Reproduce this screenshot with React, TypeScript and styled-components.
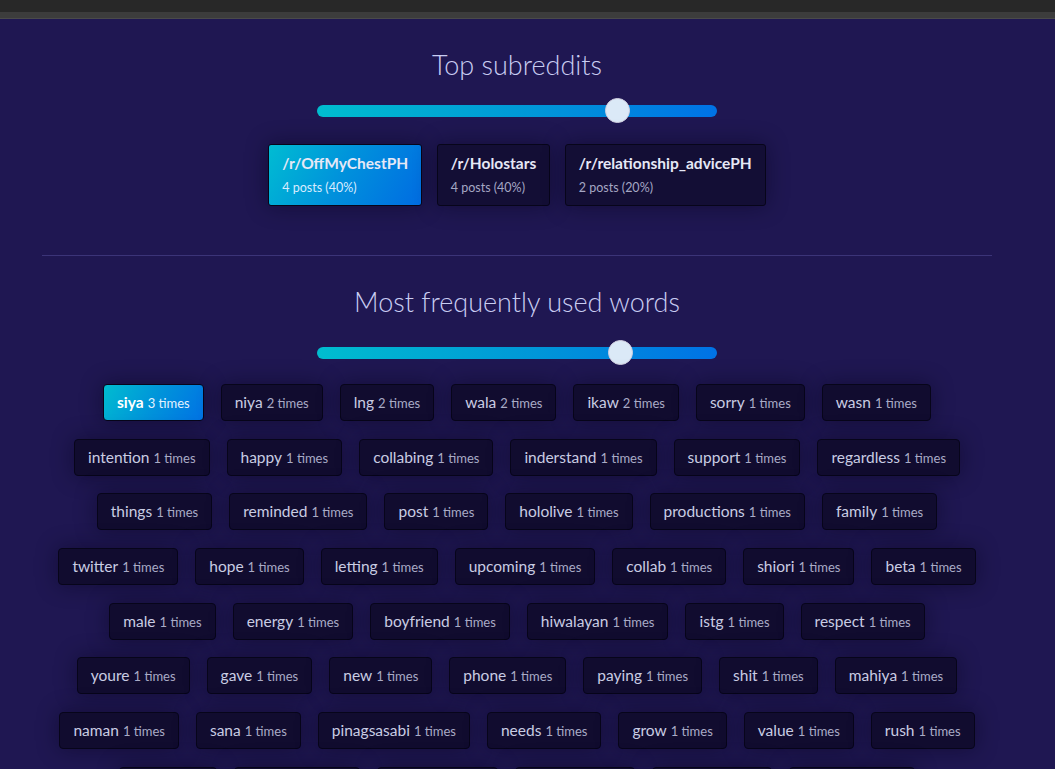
import React, { useState } from "react";
import styled, { createGlobalStyle } from "styled-components";

const GlobalStyle = createGlobalStyle`
  html, body {
    margin: 0;
    padding: 0;
    background: #1f1752;
  }
  body {
    font-family: Lato, "Open Sans", sans-serif;
    overflow: hidden;
  }
`;

type Word = { word: string; count: number };

const subreddits = [
  { name: "/r/OffMyChestPH", posts: 4, pct: 40 },
  { name: "/r/Holostars", posts: 4, pct: 40 },
  { name: "/r/relationship_advicePH", posts: 2, pct: 20 },
];

// rows kept as in the screenshot so the wrap stays the same
const wordRows: Word[][] = [
  [
    { word: "siya", count: 3 },
    { word: "niya", count: 2 },
    { word: "lng", count: 2 },
    { word: "wala", count: 2 },
    { word: "ikaw", count: 2 },
    { word: "sorry", count: 1 },
    { word: "wasn", count: 1 },
  ],
  ["intention", "happy", "collabing", "inderstand", "support", "regardless"].map((w) => ({ word: w, count: 1 })),
  ["things", "reminded", "post", "hololive", "productions", "family"].map((w) => ({ word: w, count: 1 })),
  ["twitter", "hope", "letting", "upcoming", "collab", "shiori", "beta"].map((w) => ({ word: w, count: 1 })),
  ["male", "energy", "boyfriend", "hiwalayan", "istg", "respect"].map((w) => ({ word: w, count: 1 })),
  ["youre", "gave", "new", "phone", "paying", "shit", "mahiya"].map((w) => ({ word: w, count: 1 })),
  ["naman", "sana", "pinagsasabi", "needs", "grow", "value", "rush"].map((w) => ({ word: w, count: 1 })),
  ["ako", "nothing", "friends", "people", "always", "feelings"].map((w) => ({ word: w, count: 1 })),
];

const App = () => {
  const [subLimit, setSubLimit] = useState(767);
  const [wordLimit, setWordLimit] = useState(777);

  return (
    <>
      <GlobalStyle />
      <Chrome>
        <ChromeStrip />
      </Chrome>
      <Page>
        <Main>
          <Section>
            <Heading>Top subreddits</Heading>
            <Slider
              type="range"
              min={0}
              max={1000}
              value={subLimit}
              $gap={16}
              onChange={(e) => setSubLimit(Number(e.target.value))}
            />
            <CardRow>
              {subreddits.map((s, idx) => (
                <Card key={s.name} $active={idx === 0}>
                  <CardTitle>{s.name}</CardTitle>
                  <CardSub $active={idx === 0}>
                    {s.posts} posts ({s.pct}%)
                  </CardSub>
                </Card>
              ))}
            </CardRow>
          </Section>
          <Divider />
          <Section>
            <Heading>Most frequently used words</Heading>
            <Slider
              type="range"
              min={0}
              max={1000}
              value={wordLimit}
              $gap={21}
              onChange={(e) => setWordLimit(Number(e.target.value))}
            />
            <WordList>
              {wordRows.map((row, r) => (
                <WordRow key={r}>
                  {row.map((w, i) => {
                    const active = r === 0 && i === 0;
                    return (
                      <Chip key={w.word} $active={active}>
                        <ChipWord $active={active}>{w.word}</ChipWord>
                        <ChipCount $active={active}>{w.count} times</ChipCount>
                      </Chip>
                    );
                  })}
                </WordRow>
              ))}
            </WordList>
          </Section>
        </Main>
      </Page>
    </>
  );
};

export default App;

const Chrome = styled.div`
  height: 12px;
  background: #282828;
`;

const ChromeStrip = styled.div`
  position: relative;
  top: 12px;
  height: 6px;
  background: #3c3c3c;
  border-bottom: 1px solid #4a4a4a;
`;

const Page = styled.div`
  padding: 7px 63px 0 42px;
`;

const Main = styled.div`
  width: 950px;
`;

const Section = styled.section`
  display: flex;
  flex-direction: column;
  align-items: center;
  padding-top: 29px;
`;

const Heading = styled.h2`
  margin: 0;
  font-size: 27px;
  line-height: 34px;
  font-weight: 300;
  color: #c9cdf2;
`;

const Slider = styled.input<{ $gap?: number }>`
  appearance: none;
  -webkit-appearance: none;
  width: 400px;
  height: 25px;
  margin: ${({ $gap }) => $gap ?? 16}px 0 0;
  background: transparent;
  outline: none;

  &::-webkit-slider-runnable-track {
    height: 12px;
    border-radius: 6px;
    background: linear-gradient(90deg, #00bdcf 0%, #0096d8 55%, #0072e6 100%);
  }

  &::-webkit-slider-thumb {
    -webkit-appearance: none;
    width: 25px;
    height: 25px;
    margin-top: -6.5px;
    border-radius: 50%;
    background: #dbe9f7;
    border: 1px solid #d2d0e0;
    box-sizing: border-box;
  }
`;

const CardRow = styled.div`
  display: flex;
  justify-content: center;
  gap: 14.5px;
  margin-top: 21px;
  padding-bottom: 49px;
`;

const Card = styled.div<{ $active?: boolean }>`
  display: flex;
  flex-direction: column;
  height: 62px;
  box-sizing: border-box;
  padding: 7px 13px 0;
  border: 1px solid #07051a;
  border-radius: 3px;
  background: ${({ $active }) =>
    $active ? "linear-gradient(120deg, #00bcd2 0%, #0090dc 50%, #006ce2 100%)" : "#130e35"};
  box-shadow: 0 0 22px rgba(6, 4, 24, 0.45);
`;

const CardTitle = styled.div`
  font-size: 15.5px;
  line-height: 22px;
  font-weight: 700;
  color: #e6e8f6;
`;

const CardSub = styled.div<{ $active?: boolean }>`
  margin-top: 6px;
  font-size: 12.5px;
  line-height: 16px;
  color: ${({ $active }) => ($active ? "#d9ecff" : "#a5a7c4")};
`;

const Divider = styled.hr`
  margin: 0;
  border: none;
  height: 1px;
  background: #3b3478;
`;

const WordList = styled.div`
  display: flex;
  flex-direction: column;
  gap: 17.7px;
  margin-top: 19px;
  width: 100%;
`;

const WordRow = styled.div`
  display: flex;
  justify-content: center;
  gap: 17px;
`;

const Chip = styled.div<{ $active?: boolean }>`
  display: flex;
  align-items: baseline;
  gap: 4px;
  height: 37px;
  box-sizing: border-box;
  padding: 0 13px;
  line-height: 35px;
  border: 1px solid #07051a;
  border-radius: 4px;
  background: ${({ $active }) =>
    $active ? "linear-gradient(120deg, #00bcd0 0%, #0094da 50%, #0072e4 100%)" : "#110c2f"};
  box-shadow: 0 0 22px rgba(6, 4, 24, 0.45);
`;

const ChipWord = styled.span<{ $active?: boolean }>`
  font-size: 15.5px;
  font-weight: ${({ $active }) => ($active ? 700 : 400)};
  color: ${({ $active }) => ($active ? "#ffffff" : "#c9cce3")};
`;

const ChipCount = styled.span<{ $active?: boolean }>`
  font-size: 13px;
  color: ${({ $active }) => ($active ? "#e4f2ff" : "#a9abc6")};
`;
